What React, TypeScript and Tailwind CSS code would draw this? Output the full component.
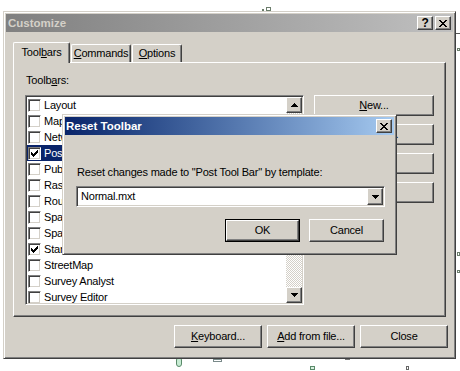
import React from "react";

const raised =
  "bg-[#d4d0c8] border border-t-white border-l-white border-r-[#404040] border-b-[#404040] shadow-[inset_-1px_-1px_0_#808080]";
const sunken =
  "border border-t-[#808080] border-l-[#808080] border-r-white border-b-white shadow-[inset_1px_1px_0_#404040,inset_-1px_-1px_0_#d4d0c8] p-px";
const frame =
  "bg-[#d4d0c8] border border-t-[#d4d0c8] border-l-[#d4d0c8] border-r-[#404040] border-b-[#404040] shadow-[inset_1px_1px_0_#fff,inset_-1px_-1px_0_#808080] p-[2px]";

const toolbars: { name: string; checked: boolean; selected?: boolean }[] = [
  { name: "Layout", checked: false },
  { name: "Map Cache", checked: false },
  { name: "Network Analyst", checked: false },
  { name: "Post Tool Bar", checked: true, selected: true },
  { name: "Publisher", checked: false },
  { name: "Raster Painting", checked: false },
  { name: "Route Editing", checked: false },
  { name: "Spatial Adjustment", checked: false },
  { name: "Spatial Analyst", checked: false },
  { name: "Standard", checked: true },
  { name: "StreetMap", checked: false },
  { name: "Survey Analyst", checked: false },
  { name: "Survey Editor", checked: false },
];

function CloseGlyph() {
  return (
    <svg width="8" height="7" viewBox="0 0 8 7" shapeRendering="crispEdges">
      <path d="M0 0h2v1h-2zM6 0h2v1h-2zM1 1h2v1h-2zM5 1h2v1h-2zM2 2h4v1h-4zM3 3h2v1h-2zM2 4h4v1h-4zM1 5h2v1h-2zM5 5h2v1h-2zM0 6h2v1h-2zM6 6h2v1h-2z" fill="#000" />
    </svg>
  );
}

function Arrow({ up }: { up?: boolean }) {
  return (
    <svg width="7" height="4" viewBox="0 0 7 4" shapeRendering="crispEdges">
      {up ? (
        <path d="M3 0h1v1h-1zM2 1h3v1h-3zM1 2h5v1h-5zM0 3h7v1h-7z" fill="#000" />
      ) : (
        <path d="M0 0h7v1h-7zM1 1h5v1h-5zM2 2h3v1h-3zM3 3h1v1h-1z" fill="#000" />
      )}
    </svg>
  );
}

function Check() {
  return (
    <svg width="7" height="7" viewBox="0 0 7 7" shapeRendering="crispEdges">
      <path d="M6 0h1v1h-1zM5 1h2v1h-2zM0 2h1v1h-1zM4 2h3v1h-3zM0 3h2v1h-2zM3 3h3v1h-3zM0 4h5v1h-5zM1 5h3v1h-3zM2 6h1v1h-1z" fill="#000" />
    </svg>
  );
}

function Checkbox({ checked }: { checked: boolean }) {
  return (
    <div className="w-[13px] h-[13px] bg-white border border-t-[#808080] border-l-[#808080] border-r-white border-b-white shadow-[inset_1px_1px_0_#404040,inset_-1px_-1px_0_#d4d0c8] flex items-center justify-center shrink-0">
      {checked && <Check />}
    </div>
  );
}

function Button({ children, className = "" }: { children: React.ReactNode; className?: string }) {
  return <div className={`${raised} flex items-center justify-center ${className}`}>{children}</div>;
}

export default function App() {
  return (
    <div
      className="relative w-[460px] h-[371px] bg-white overflow-hidden text-[11px] leading-[13px] tracking-[-0.2px] text-black"
      style={{ fontFamily: '"Liberation Sans", Arial, sans-serif' }}
    >
      {/* stray drawing marks behind the dialogs */}
      <div className="absolute left-[262px] top-[9px] w-[2px] h-[2px] bg-[#6b7d6b]" />
      <div className="absolute left-[266px] top-[7px] w-[5px] h-[4px] border border-[#6b7d6b]" />
      <div className="absolute left-[456px] top-[33px] w-[4px] h-[1px] bg-[#555]" />
      <div className="absolute left-[457px] top-[48px] w-[3px] h-[3px] border border-[#6b7d6b]" />
      <div className="absolute left-[457px] top-[252px] w-[3px] h-[4px] border border-[#6b7d6b]" />
      <div className="absolute left-[457px] top-[270px] w-[3px] h-[3px] border border-[#6b7d6b]" />
      <div className="absolute left-[176px] top-[357px] w-[6px] h-[10px] rounded-full border border-[#5a8a6a] bg-[#c8ecd4]" />
      <div className="absolute left-[213px] top-[359px] w-[9px] h-[3px] border border-[#7a8a8a]" />
      <div className="absolute left-[345px] top-[359px] w-[5px] h-[1px] bg-[#777]" />
      <div className="absolute left-[310px] top-[366px] w-[5px] h-[4px] border border-[#5a8a6a] bg-[#d8f0e0]" />
      <div className="absolute left-[406px] top-[366px] w-[3px] h-[4px] border border-[#666]" />

      {/* Customize window */}
      <div className={`${frame} absolute left-[3px] top-[11px] w-[453px] h-[348px] flex flex-col`}>
        <div className="h-[18px] flex items-center bg-gradient-to-r from-[#808080] to-[#c0c0c0] pl-[2px] pr-[2px]">
          <span className="font-bold text-[#d4d0c8] text-[11.5px] tracking-normal">Customize</span>
          <div className="ml-auto flex gap-[2px]">
            <div className={`${raised} w-[16px] h-[14px] flex items-center justify-center font-bold text-[12px] leading-none`}>?</div>
            <div className={`${raised} w-[16px] h-[14px] flex items-center justify-center`}>
              <CloseGlyph />
            </div>
          </div>
        </div>

        {/* tabs */}
        <div className="mt-[10px] h-[20px] ml-[7px] flex items-end">
          <div className="relative z-10 w-[57px] h-[21px] -mb-px bg-[#d4d0c8] border-t border-l border-r border-t-white border-l-white border-r-[#404040] shadow-[inset_-1px_0_0_#808080] rounded-t-[2px] flex items-center justify-center pb-[2px]">
            Tool<u>b</u>ars
          </div>
          <div className="w-[60px] h-[18px] ml-[1px] border-t border-l border-r border-t-white border-l-white border-r-[#404040] shadow-[inset_-1px_0_0_#808080] rounded-t-[2px] flex items-center justify-center">
            <span><u>C</u>ommands</span>
          </div>
          <div className="w-[50px] h-[18px] ml-[1px] border-t border-l border-r border-t-white border-l-white border-r-[#404040] shadow-[inset_-1px_0_0_#808080] rounded-t-[2px] flex items-center justify-center">
            <span><u>O</u>ptions</span>
          </div>
        </div>

        {/* tab panel */}
        <div className="ml-[7px] w-[433px] h-[255px] border border-t-white border-l-white border-r-[#404040] border-b-[#404040] shadow-[inset_-1px_-1px_0_#808080] pl-[11px] pt-[11px]">
          <div className="pl-px">
            Toolb<u>a</u>rs:
          </div>
          <div className="mt-[8px] flex items-start gap-[10px]">
            <div className={`${sunken} w-[279px] h-[210px] bg-white flex`}>
              <div className="flex-1 overflow-hidden">
                {toolbars.map((t) => (
                  <div
                    key={t.name}
                    className={`h-[16px] flex items-center pl-px gap-[2px] ${t.selected ? "bg-[#0a246a] text-white" : ""}`}
                  >
                    <Checkbox checked={t.checked} />
                    <span className="pl-px whitespace-nowrap">{t.name}</span>
                  </div>
                ))}
              </div>
              <div className="w-[16px] flex flex-col bg-[repeating-conic-gradient(#d4d0c8_0_25%,#ffffff_0_50%)] bg-[length:2px_2px]">
                <Button className="h-[16px]">
                  <Arrow up />
                </Button>
                <div className="h-[20px]" />
                <div className={`${raised} h-[70px]`} />
                <div className="flex-1" />
                <Button className="h-[16px]">
                  <Arrow />
                </Button>
              </div>
            </div>
            <div className="flex flex-col gap-[8px]">
              <Button className="w-[120px] h-[21px]">
                <span>
                  <u>N</u>ew...
                </span>
              </Button>
              <Button className="w-[120px] h-[21px]">
                <span>Rename...</span>
              </Button>
              <Button className="w-[120px] h-[21px]">
                <span>Delete</span>
              </Button>
              <Button className="w-[120px] h-[21px]">
                <span>Reset...</span>
              </Button>
            </div>
          </div>
        </div>

        {/* bottom buttons */}
        <div className="mt-[8px] flex justify-end gap-[5px] pr-[5px]">
          <Button className="w-[88px] h-[23px]">
            <span>
              <u>K</u>eyboard...
            </span>
          </Button>
          <Button className="w-[88px] h-[23px]">
            <span>
              <u>A</u>dd from file...
            </span>
          </Button>
          <Button className="w-[88px] h-[23px]">
            <span>Close</span>
          </Button>
        </div>
      </div>

      {/* Reset Toolbar dialog */}
      <div className={`${frame} absolute z-20 left-[62px] top-[114px] w-[335px] h-[141px] flex flex-col`}>
        <div className="h-[18px] flex items-center bg-gradient-to-r from-[#0a246a] to-[#a6caf0] pl-[1px] pr-[2px]">
          <span className="font-bold text-white text-[11.5px] tracking-normal">Reset Toolbar</span>
          <div className={`${raised} ml-auto w-[16px] h-[14px] flex items-center justify-center`}>
            <CloseGlyph />
          </div>
        </div>
        <div className="mt-[31px] pl-[12px] whitespace-nowrap">
          Reset changes made to "Post Tool Bar" by template:
        </div>
        <div className={`${sunken} mt-[7px] ml-[11px] w-[309px] h-[21px] bg-white flex items-center`}>
          <span className="pl-[3px] flex-1">Normal.mxt</span>
          <Button className="w-[16px] h-[17px]">
            <Arrow />
          </Button>
        </div>
        <div className="mt-[12px] flex justify-end gap-[9px] pr-[10px]">
          <div className="w-[75px] h-[23px] border border-black flex">
            <Button className="flex-1">
              <span>OK</span>
            </Button>
          </div>
          <Button className="w-[75px] h-[23px]">
            <span>Cancel</span>
          </Button>
        </div>
      </div>
    </div>
  );
}
